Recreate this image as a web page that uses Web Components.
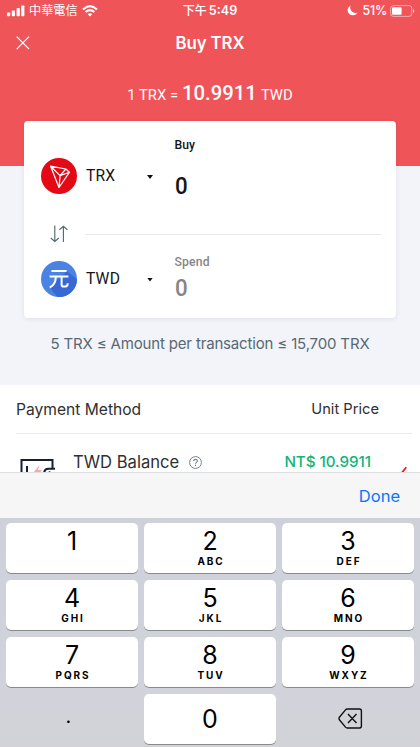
<!DOCTYPE html>
<html lang="en"><head><meta charset="utf-8"><title>Buy TRX</title>
<style>
html,body{margin:0;width:420px;height:747px;overflow:hidden;background:#f3f4f9}
body{font-family:Inter,"Noto Sans CJK TC",sans-serif}
</style></head><body>
<buy-screen></buy-screen>
<script>
const define=(name,css,html)=>customElements.define(name,class extends HTMLElement{
  constructor(){super();const r=this.attachShadow({mode:'open'});
    r.innerHTML=`<style>*{box-sizing:border-box}svg{display:block;flex:none}${css}</style>${html}`;}
});
define('status-bar',`:host{display:grid;grid-template-columns:1fr auto 1fr;align-items:center;height:21px;padding:0 5px 0 7px;color:#fff;font-size:13px;line-height:20px}
.l,.r{display:flex;align-items:center}.r{justify-content:flex-end}
.carrier{font-size:12.2px;margin:0 4px 0 4px}.time{font-size:12.6px;font-weight:600;margin-right:2px}.time span{font-size:12px;font-weight:500;margin-right:1px}
.pct{font-size:12.4px;font-weight:500;letter-spacing:-.2px;margin:0 3px 0 4px}`,
`<div class="l"><svg width="18" height="12" viewBox="0 0 18 12" fill="#fff"><rect x="0" y="7.5" width="3.2" height="3.7" rx=".8"/><rect x="4.8" y="5.5" width="3.2" height="5.7" rx=".8"/><rect x="9.6" y="3" width="3.2" height="8.2" rx=".8"/><rect x="14.2" y=".5" width="3.2" height="10.7" rx=".8"/></svg>
<span class="carrier">中華電信</span>
<svg width="16" height="12" viewBox="0 0 16 12" fill="none" stroke="#fff" stroke-width="2.1"><path d="M1 4.4Q8-2.1 15 4.4M3.6 7.1Q8 3 12.4 7.1"/><path d="M8 11.4 5.8 9.2Q8 7.3 10.2 9.2Z" fill="#fff" stroke="none"/></svg></div>
<div class="time"><span>下午</span>&#8202;5:49</div>
<div class="r"><svg width="11" height="11" viewBox="0 0 11 11"><path d="M3.7.4A5.2 5.2 0 1 0 10.5 7.4 5.2 5.2 0 0 1 3.7.4Z" fill="#fff"/></svg><span class="pct">51%</span>
<svg width="25" height="12" viewBox="0 0 25 12"><rect x=".6" y=".6" width="21.2" height="10.8" rx="2.8" fill="none" stroke="#fff" stroke-opacity=".5"/><rect x="2" y="2.2" width="9.6" height="7.6" rx="1.2" fill="#fff"/><path d="M23 4v4q1.4-.5 1.4-2t-1.4-2Z" fill="#fff" fill-opacity=".6"/></svg></div>`);
define('nav-bar',`:host{display:grid;grid-template-columns:14px 1fr 14px;align-items:center;padding:0 16px;height:44px;color:#fff}
h1{margin:0;text-align:center;font-size:16.8px;letter-spacing:-.1px;font-weight:600;line-height:24px}`,
`<svg width="14" height="14" viewBox="0 0 14 14" fill="none" stroke="#fff" stroke-width="1.2"><path d="m.7.7 12.4 12.4M13.1.7.7 13.1"/></svg><h1><slot></slot></h1>`);
define('rate-line',`:host{display:flex;justify-content:center;align-items:baseline;gap:4px;height:30px;line-height:28px;font-family:Roboto,sans-serif;font-size:14.8px;color:#fff}
b{font-size:20.3px;font-weight:500}`,
`<span><slot name="base"></slot></span><b><slot></slot></b><span><slot name="quote"></slot></span>`);
define('tron-icon',`:host{display:block;width:36px;height:36px}`,
`<svg width="36" height="36" viewBox="0 0 36 36"><circle cx="18" cy="18" r="18" fill="#e50915"/><path d="M9.6 8.2 24.8 11 28.4 14.3 18 29.5ZM9.6 8.2 19.1 17.6 18 29.5M19.1 17.6 28.4 14.3M19.1 17.6 24.8 11" fill="none" stroke="#fff" stroke-width="1.2" stroke-linejoin="round"/></svg>`);
define('yuan-icon',`:host{display:block;width:36px;height:36px}`,
`<svg width="36" height="36" viewBox="0 0 36 36"><defs><clipPath id="c"><circle cx="18" cy="18" r="18"/></clipPath></defs><circle cx="18" cy="18" r="18" fill="#4b83e5"/><path clip-path="url(#c)" d="M26 10 40 22V40H20L9 27 15 20Z" fill="#3768d3"/><path d="M10.4 10h15.2M8.6 15.5h18.8M14.8 15.5c0 5.2-1.5 8.8-6 11M20.6 15.5v8.3q0 1.8 1.8 1.8h2q2.2 0 2.3-3.4" fill="none" stroke="#fff" stroke-width="2"/></svg>`);
define('drop-arrow',`:host{display:block;width:6px;height:4px;background:#111;clip-path:polygon(0 0,100% 0,50% 100%)}`,``);
define('asset-row',`:host{display:grid;grid-template-columns:45px 60px 28.5px 1fr;color:#151515}
.i{padding-top:var(--top)}.code{font-family:Roboto,sans-serif;font-size:15.6px;letter-spacing:.2px;line-height:20px;padding-top:calc(var(--top) + 8px)}
.a{padding:calc(var(--top) + 17px) 0 0 1px}
.f{color:var(--field);font-family:Roboto,sans-serif;font-weight:500}.lab{font-size:12.2px;line-height:16px;letter-spacing:var(--ls,0);font-weight:var(--lw,500)}.val{font-size:24px;line-height:30px;margin-top:var(--gap);transform:scaleX(.93);transform-origin:left}`,
`<div class="i"><slot name="icon"></slot></div><div class="code"><slot name="code"></slot></div><div class="a"><drop-arrow></drop-arrow></div><div class="f"><div class="lab"><slot name="label"></slot></div><div class="val"><slot></slot></div></div>`);
define('swap-divider',`:host{display:grid;grid-template-columns:44px 1fr;align-items:center}.i{padding-left:9px}i{display:block;height:1px;background:#e7e8ec}`,
`<div class="i"><svg width="19" height="18" viewBox="0 0 19 18" fill="none" stroke="#536975" stroke-width="1.15"><path d="M4.8.5v15.8M.8 13l4 3.5 4-3.5M13.4 17V1M9.4 4.7l4-3.5 4 3.5"/></svg></div><i></i>`);
define('exchange-card',`:host{display:block;height:197px;margin:0 24px;padding:16px 15px 0 17px;background:#fff;border-radius:4px;box-shadow:0 1px 4px #2830501a}
asset-row{height:87px}.buy{--top:21px;--gap:18px;--field:#151515}.spend{--top:6.5px;--gap:3px;--field:#858585;--ls:.15px;--lw:500}
swap-divider{height:20px}.spend{margin-top:10px}`,
`<asset-row class="buy"><tron-icon slot="icon"></tron-icon><span slot="code">TRX</span><span slot="label">Buy</span>0</asset-row><swap-divider></swap-divider><asset-row class="spend"><yuan-icon slot="icon"></yuan-icon><span slot="code">TWD</span><span slot="label">Spend</span>0</asset-row>`);
define('payment-list',`:host{display:block;height:87px;overflow:hidden;background:#fff;color:#303030;font-size:15.6px}
.h{display:flex;justify-content:space-between;padding:0 41px 0 16px;height:48px;line-height:49px}
.h span:last-child{font-size:14.7px}
hr{border:0;height:1px;background:#ececef;margin:0 8px 0 16px}
.row{display:flex;padding:16px 12px 0 20px;height:80px}.wallet{margin-top:8px}
.name{font-size:16.6px;line-height:25px;margin-left:17px}.q{margin:6px 0 0 10px}.price{margin-left:auto;color:#12b47a;font-size:15.2px;font-weight:500;letter-spacing:-.05px;line-height:23px}.check{margin:16px 0 0 22px}`,
`<div class="h"><span>Payment Method</span><span>Unit Price</span></div><hr><div class="row"><svg class="wallet" width="36" height="32" viewBox="0 0 36 32" fill="none" stroke="#17212e" stroke-width="2"><path d="M1.5 29V2h31v9M7 8v18M35 10.7h-6.5c-3 0-4.5 2-4.5 5.3s1.5 5 4.5 5H35"/><path d="M19.5 7 13 15h4l-2 6 7-9h-4Z" fill="#f7a9aa" stroke="none"/><circle cx="29.6" cy="14.6" r="1.3" fill="#17212e" stroke="none"/></svg>
<span class="name">TWD Balance</span><svg class="q" width="13" height="13" viewBox="0 0 13 13" fill="none" stroke="#75828e"><circle cx="6.5" cy="6.5" r="5.9"/><path d="M4.7 5.1c0-2.4 3.7-2.3 3.6-.1 0 1.4-1.8 1.4-1.8 2.8M6.5 8.7v1.2" stroke-width="1.1"/></svg>
<span class="price">NT$ 10.9911</span><svg class="check" width="15" height="16" viewBox="0 0 15 16" fill="none" stroke="#e02229" stroke-width="1.8"><path d="M-1 10 3 14 13.3 1.3"/></svg></div>`);
define('key-cap',`:host{display:flex;flex-direction:column;align-items:center;height:50px;border-radius:5px;background:#fff;box-shadow:0 1px 0 #898a8d;color:#000}
:host([plain]){background:none;box-shadow:none}
:host([centered]){justify-content:center}
.d{font-size:25px;line-height:30px;margin-top:3px}:host([centered]) .d{margin:-1px 0 0}:host([point]) .d{font-size:20px;margin:-8px 7px 0 0}:host([icon]) .d{margin-top:-3px}.s{font-size:10px;font-weight:700;line-height:12px;letter-spacing:1.9px;padding-left:2px;margin-top:-1px}`,
`<span class="d"><slot></slot></span><span class="s"><slot name="letters"></slot></span>`);
define('number-pad',`:host{display:grid;grid-template-columns:repeat(3,132px);grid-auto-rows:50px;gap:7px 6px;padding:5px 6px 0;height:229px;background:linear-gradient(#ced1da,#d1d3db 65%,#d3d2d9)}svg{margin:auto}.del{margin-left:5px}`,
[['1',''],['2','ABC'],['3','DEF'],['4','GHI'],['5','JKL'],['6','MNO'],['7','PQRS'],['8','TUV'],['9','WXYZ']].map(k=>`<key-cap>${k[0]}${k[1]?`<span slot="letters">${k[1]}</span>`:''}</key-cap>`).join('')+
`<key-cap plain centered point>.</key-cap><key-cap centered>0</key-cap><key-cap plain centered icon><svg class="del" width="25" height="21" viewBox="0 0 25 21" fill="none" stroke="#111" stroke-width="1.4"><path d="M9.2 1H21.5Q23.4 1 23.4 2.9v15.2Q23.4 20 21.5 20H9.2Q8.3 20 7.5 19.1L1.4 11.8Q.6 10.5 1.4 9.2L7.5 1.9Q8.3 1 9.2 1ZM10 6l8.5 9M18.5 6l-8.5 9" stroke-linejoin="round"/></svg></key-cap>`);
define('input-toolbar',`:host{display:flex;justify-content:flex-end;align-items:center;height:46px;padding:0 20px 0 0;background:#f6f6f7;border-top:1px solid #dedfe1;color:#0a75fa;font-size:16.5px}`,`<slot></slot>`);
define('buy-screen',`:host{display:flex;flex-direction:column;width:420px;height:747px;background:#f3f4f9;overflow:hidden}
header{height:166px;flex:none;background:#ef5459}nav-bar{height:44px}rate-line{margin-top:14px}
exchange-card{margin-top:-45px}.limit{height:67px;line-height:51px;text-align:center;font-size:15px;letter-spacing:-.16px;color:#566974}payment-list,input-toolbar,number-pad{flex:none}`,
`<header><status-bar></status-bar><nav-bar>Buy TRX</nav-bar><rate-line><span slot="base">1 TRX =</span>10.9911<span slot="quote">TWD</span></rate-line></header>
<exchange-card></exchange-card><div class="limit">5 TRX ≤ Amount per transaction ≤ 15,700 TRX</div><payment-list></payment-list><input-toolbar>Done</input-toolbar><number-pad></number-pad>`);
</script></body></html>
